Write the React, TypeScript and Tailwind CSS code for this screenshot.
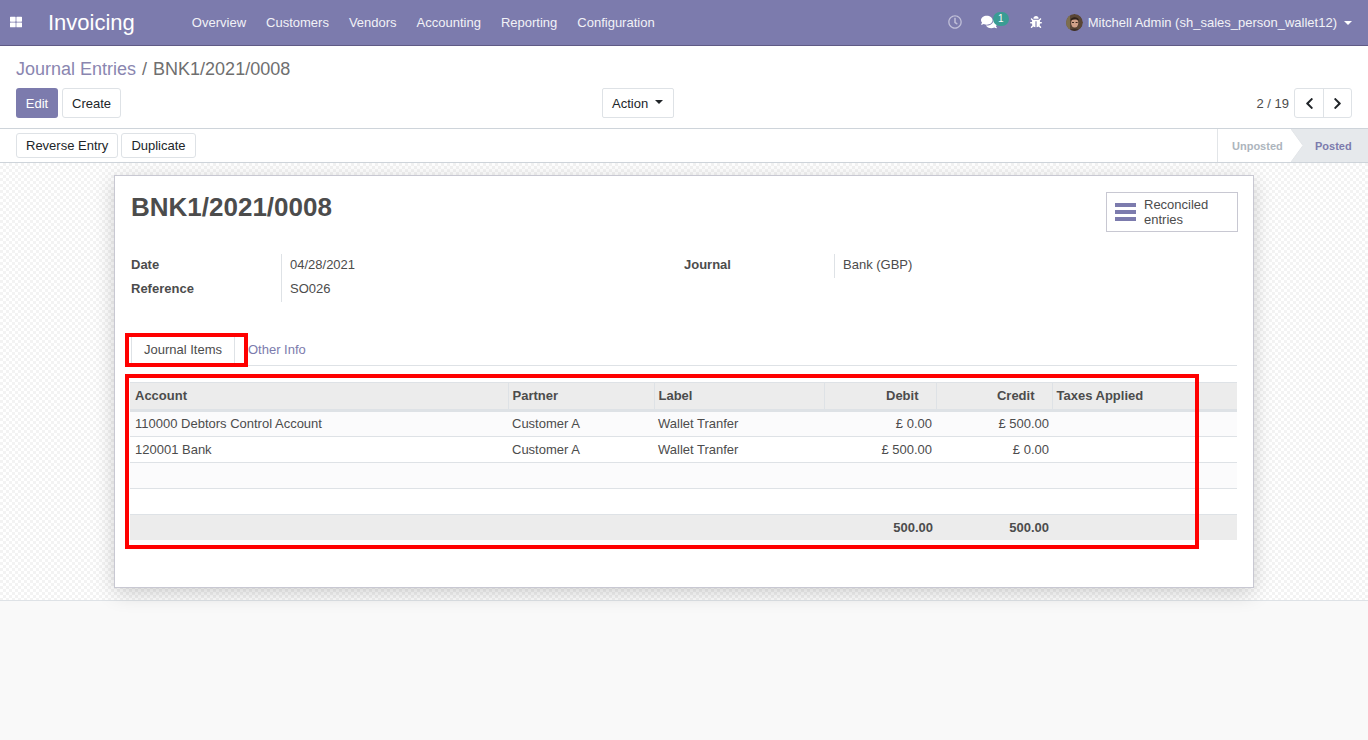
import React from "react";
import { FaBug, FaChevronLeft, FaChevronRight, FaComments, FaRegClock, FaThLarge } from "react-icons/fa";

const navItems = ["Overview", "Customers", "Vendors", "Accounting", "Reporting", "Configuration"];

function Avatar() {
  return (
    <svg width="17" height="17" viewBox="0 0 17 17" className="rounded-full">
      <circle cx="8.5" cy="8.5" r="8.5" fill="#5a4636" />
      <rect x="0" y="0" width="4" height="17" fill="#7d6e4e" />
      <ellipse cx="8.7" cy="9" rx="3.6" ry="4.6" fill="#d0a088" />
      <path d="M4.5 6.5 C5 2.5 12 2 13 6.5 C11 5 7 5 4.5 6.5Z" fill="#2e211a" />
      <path d="M3 17 C4 13.5 13 13.5 14 17Z" fill="#3f3129" />
      <rect x="6" y="8" width="2" height="1" fill="#3a2a20" />
      <rect x="9.6" y="8" width="2" height="1" fill="#3a2a20" />
    </svg>
  );
}

function Btn({ children, className = "" }: { children: React.ReactNode; className?: string }) {
  return (
    <button className={`rounded-[3px] border border-[#dee2e6] bg-white text-[13px] text-[#212529] ${className}`}>
      {children}
    </button>
  );
}

const rows = [
  ["110000 Debtors Control Account", "Customer A", "Wallet Tranfer", "£ 0.00", "£ 500.00"],
  ["120001 Bank", "Customer A", "Wallet Tranfer", "£ 500.00", "£ 0.00"],
  ["", "", "", "", ""],
  ["", "", "", "", ""],
];

export default function App() {
  return (
    <div className="flex h-[740px] flex-col overflow-hidden bg-[#f9f9f9] font-['Liberation_Sans',Arial,sans-serif] text-[13px] text-[#4c4c4c]">
      {/* Top navigation */}
      <header className="flex h-[46px] shrink-0 items-center border-b border-[#5f5a85] bg-[#7c7bad] text-white">
        <FaThLarge className="ml-[10px] mt-[-2px] text-[12px]" />
        <span className="ml-[26px] mt-[1px] text-[22px] leading-none">Invoicing</span>
        <nav className="ml-[57px] flex gap-[20px] text-[13px] text-[#f2f2f7]">
          {navItems.map((n) => (
            <span key={n}>{n}</span>
          ))}
        </nav>
        <div className="ml-auto flex items-center">
          <FaRegClock className="mt-[-2px] text-[14px] text-[#c0bfd8]" />
          <span className="relative ml-[19px] mt-[-2px] flex">
            <FaComments className="text-[16px] text-white" />
            <span className="absolute left-[12px] top-[-2px] flex h-[14px] w-[16px] items-center justify-center rounded-full bg-[#3a9c94] text-[10px] text-white">
              1
            </span>
          </span>
          <FaBug className="ml-[33px] mt-[-2px] text-[12px] text-white" />
          <span className="ml-[24px] flex items-center">
            <Avatar />
          </span>
          <span className="ml-[5px] text-[13px] text-[#f2f2f7]">Mitchell Admin (sh_sales_person_wallet12)</span>
          <span className="ml-[7px] mr-[16px] h-0 w-0 border-x-[4px] border-t-[4px] border-x-transparent border-t-white" />
        </div>
      </header>

      {/* Control panel */}
      <section className="h-[83px] shrink-0 border-b border-[#ced4da] bg-white px-[16px]">
        <div className="flex h-[42px] items-center pt-[4px] text-[18px] leading-none">
          <span className="text-[#8a86b0]">Journal Entries</span>
          <span className="ml-[6px] text-[#6f6f6f]">/</span>
          <span className="ml-[6px] text-[#6f6f6f]">BNK1/2021/0008</span>
        </div>
        <div className="relative flex items-center">
          <button className="h-[30px] w-[42px] rounded-[3px] bg-[#7c7bad] pt-[1px] text-[13px] text-white">Edit</button>
          <Btn className="ml-[4px] h-[30px] px-[9px] pt-[1px]">Create</Btn>
          <div className="ml-[481px] flex h-[30px] w-[72px] items-center rounded-[2px] border border-[#dee2e6] bg-white pl-[9px] pt-[1px] text-[13px] text-[#212529]">
            Action
            <span className="ml-[7px] mt-[-3px] h-0 w-0 border-x-[4px] border-t-[4px] border-x-transparent border-t-[#212529]" />
          </div>
          <div className="ml-auto flex items-center">
            <span className="mr-[5px] pt-[1px] text-[13px] text-[#4c4c4c]">2 / 19</span>
            <div className="flex h-[30px] rounded-[3px] border border-[#dee2e6]">
              <span className="flex w-[29px] items-center justify-center border-r border-[#dee2e6]">
                <FaChevronLeft className="text-[13px] text-[#212529]" />
              </span>
              <span className="flex w-[27px] items-center justify-center">
                <FaChevronRight className="text-[13px] text-[#212529]" />
              </span>
            </div>
          </div>
        </div>
      </section>

      {/* Status bar */}
      <section className="flex h-[34px] shrink-0 items-center border-b border-[#ced4da] bg-white pl-[16px]">
        <Btn className="h-[25px] px-[9px]">Reverse Entry</Btn>
        <Btn className="ml-[3px] h-[25px] px-[9px]">Duplicate</Btn>
        <div className="ml-auto flex h-full items-stretch text-[11px] font-bold">
          <div className="relative flex w-[74px] items-center border-l border-[#e2e5e8] pl-[14px] pt-[1px] text-[#adb5bd]">Unposted</div>
          <div className="relative flex w-[77px] items-center bg-[#e6e9ec] pl-[24px] pt-[1px] text-[#7c7bad]">
            <svg className="absolute left-0 top-0" width="12" height="33" viewBox="0 0 12 33">
              <path d="M0 0 L12 16.5 L0 33 Z" fill="#ffffff" />
              <path d="M0 0 L12 16.5 L0 33" fill="none" stroke="#e2e5e8" />
            </svg>
            Posted
          </div>
        </div>
      </section>

      {/* Form sheet background */}
      <main className="relative h-[438px] shrink-0 border-b border-[#dee2e6] bg-white bg-[repeating-conic-gradient(#f3f3f3_0_25%,#ffffff_0_50%)] bg-[length:6px_6px]">
        <div className="absolute left-[114px] top-[12px] h-[413px] w-[1140px] border border-[#c8c8d2] bg-white px-[16px] shadow-[0_5px_20px_-1px_rgba(0,0,0,0.2)]">
          <div className="flex">
            <h1 className="mt-[15px] text-[26px] font-bold leading-[32px] text-[#4c4c4c]">BNK1/2021/0008</h1>
            <div className="ml-auto mr-[-1px] mt-[16px] flex h-[40px] w-[132px] items-center border border-[#c8c8d2] pl-[8px]">
              <span className="flex w-[21px] flex-col gap-[3px]">
                <span className="h-[4px] bg-[#7c7bad]" />
                <span className="h-[4px] bg-[#7c7bad]" />
                <span className="h-[4px] bg-[#7c7bad]" />
              </span>
              <span className="ml-[8px] text-[13px] leading-[15px] text-[#4c4c4c]">
                Reconciled
                <br />
                entries
              </span>
            </div>
          </div>

          <div className="mt-[22px] flex">
            <div className="grid w-[553px] grid-cols-[150px_1fr]">
              <span className="h-[24px] pt-[1px] font-bold">Date</span>
              <span className="h-[24px] border-l border-[#dee2e6] pl-[8px] pt-[1px]">04/28/2021</span>
              <span className="h-[24px] pt-[1px] font-bold">Reference</span>
              <span className="h-[24px] border-l border-[#dee2e6] pl-[8px] pt-[1px]">SO026</span>
            </div>
            <div className="grid grid-cols-[150px_1fr] self-start">
              <span className="h-[24px] pt-[1px] font-bold">Journal</span>
              <span className="h-[24px] border-l border-[#dee2e6] pl-[8px] pt-[1px]">Bank (GBP)</span>
            </div>
          </div>

          {/* Tabs */}
          <div className="mt-[32px] flex h-[32px] items-stretch border-b border-[#dee2e6]">
            <span className="flex w-[104px] items-center justify-center border-x border-[#dee2e6] bg-white">Journal Items</span>
            <span className="ml-[13px] flex items-center text-[#7c7bad]">Other Info</span>
          </div>

          {/* Table */}
          <table className="ml-[-1px] mt-[16px] w-[1107px] table-fixed border-collapse text-[13px]">
            <colgroup>
              <col className="w-[378px]" />
              <col className="w-[146px]" />
              <col className="w-[170px]" />
              <col className="w-[112px]" />
              <col className="w-[116px]" />
              <col />
            </colgroup>
            <thead>
              <tr className="h-[28px] border-b-[3px] border-t border-[#dee2e6] bg-[#ececec] font-bold">
                <th className="px-[5px] text-left">Account</th>
                <th className="border-l border-[#dee2e6] px-[4px] text-left">Partner</th>
                <th className="border-l border-[#dee2e6] px-[4px] text-left">Label</th>
                <th className="border-l border-[#dee2e6] px-[17px] text-right">Debit</th>
                <th className="border-l border-[#dee2e6] px-[17px] text-right">Credit</th>
                <th className="border-l border-[#dee2e6] px-[4px] text-left">Taxes Applied</th>
              </tr>
            </thead>
            <tbody>
              {rows.map((r, i) => (
                <tr key={i} className={`h-[26px] border-b border-[#dee2e6] ${i % 2 === 0 ? "bg-[#fbfbfc]" : "bg-white"}`}>
                  <td className="px-[5px]">{r[0]}</td>
                  <td className="px-[4px]">{r[1]}</td>
                  <td className="px-[4px]">{r[2]}</td>
                  <td className="px-[4px] text-right">{r[3]}</td>
                  <td className="px-[3px] text-right">{r[4]}</td>
                  <td />
                </tr>
              ))}
            </tbody>
            <tfoot>
              <tr className="h-[25px] bg-[#ececec] font-bold">
                <td colSpan={3} />
                <td className="px-[3px] pt-[1px] text-right">500.00</td>
                <td className="px-[3px] pt-[1px] text-right">500.00</td>
                <td />
              </tr>
            </tfoot>
          </table>

          {/* Annotation boxes */}
          <div className="absolute left-[10px] top-[157px] h-[34px] w-[123px] border-4 border-[#ff0000]" />
          <div className="absolute left-[10px] top-[198px] h-[175px] w-[1074px] border-4 border-[#ff0000]" />
        </div>
      </main>
    </div>
  );
}
